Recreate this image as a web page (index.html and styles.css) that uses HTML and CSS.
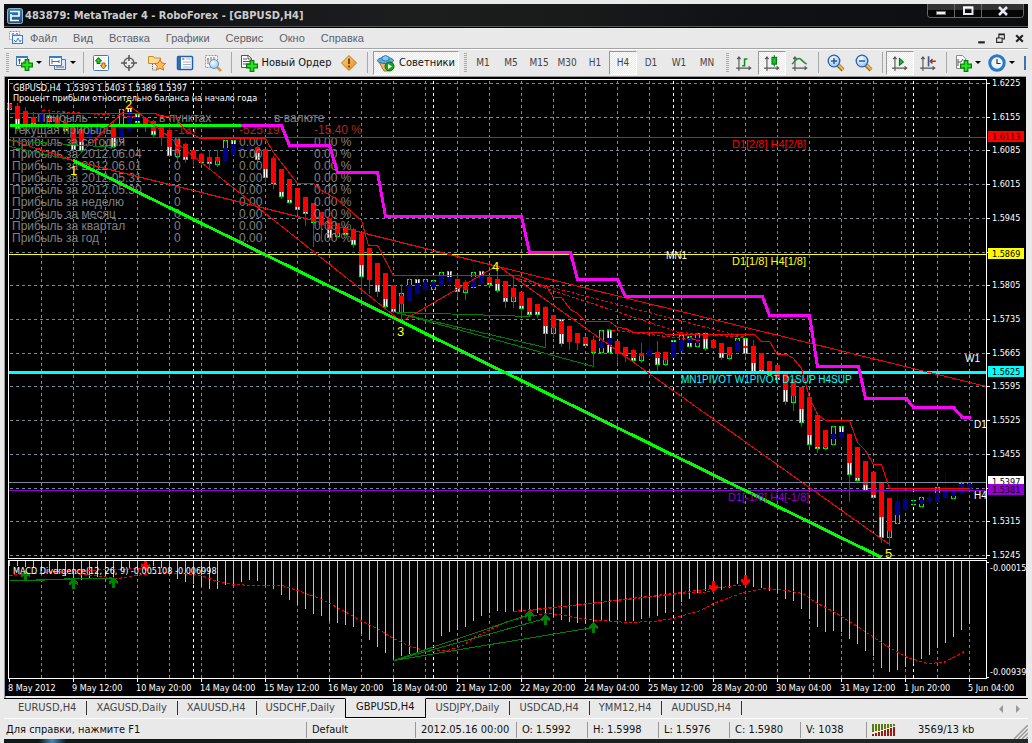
FILE: index.html
```html
<!DOCTYPE html>
<html lang="ru">
<head>
<meta charset="utf-8">
<title>MetaTrader 4 - RoboForex</title>
<link rel="stylesheet" href="styles.css">
</head>
<body>
<svg class="defs" aria-hidden="true">
  <defs>
    <linearGradient id="blueTile" x1="0" y1="0" x2="0" y2="1"><stop offset="0" stop-color="#3b7fb4"/><stop offset="1" stop-color="#15507f"/></linearGradient>
    <radialGradient id="lens" cx=".4" cy=".35" r=".7"><stop offset="0" stop-color="#fff"/><stop offset="1" stop-color="#8cc4f4"/></radialGradient>
    <linearGradient id="amber" x1="0" y1="0" x2="1" y2="1"><stop offset="0" stop-color="#ffd27a"/><stop offset="1" stop-color="#e58a1c"/></linearGradient>
    <symbol id="plus" viewBox="0 0 10 10"><path d="M3.5.5h3v3h3v3h-3v3h-3v-3h-3v-3h3z" fill="#1fe81f" stroke="#0a7a0a"/></symbol>
    <symbol id="axes" viewBox="0 0 16 16"><path d="M3.500 15V3M1 12.500h13M2 4.500l1.500-2 1.500 2M12 11l2 1.500-2 1.500" fill="none" stroke="#555"/></symbol>
    <symbol id="glass" viewBox="0 0 18 18"><path d="M10.500 10.500l5.500 5.500" stroke="#9a6a1a" stroke-width="4"/><path d="M11 10.500l5 5" stroke="#f5bd4a" stroke-width="2"/><circle cx="7" cy="7" r="5.800" fill="url(#lens)" stroke="#2a62b4" stroke-width="1.300"/></symbol>
  </defs>
</svg>
<div class="window">
  <header class="titlebar">
    <svg class="app-icon" viewBox="0 0 16 16"><rect x=".5" y=".5" width="15" height="15" rx="2" fill="url(#blueTile)" stroke="#8ab4d4"/><path d="M3 3.500h9v4.500H5M4 6v6.500h8" fill="none" stroke="#fff" stroke-width="1.700"/></svg>
    <h1 class="title">483879: MetaTrader 4 - RoboForex - [GBPUSD,H4]</h1>
    <div class="win-controls">
      <button class="win-btn" aria-label="Свернуть"><svg viewBox="0 0 12 12"><path d="M1.500 6.500h9v3h-9z" fill="#f2f0ea" stroke="#777"/></svg></button>
      <button class="win-btn" aria-label="Развернуть"><svg viewBox="0 0 12 12"><path d="M2 2.500h8.500v6.500H2z" fill="none" stroke="#e8e8f0" stroke-width="2"/><path d="M1 2.500h10" stroke="#fff" stroke-width="2"/></svg></button>
      <button class="win-btn win-close" aria-label="Закрыть"><svg viewBox="0 0 12 12"><path d="M2 2l8 8M10 2l-8 8" stroke="#e8e8f0" stroke-width="2.500"/></svg></button>
    </div>
  </header>

  <nav class="menubar">
    <svg class="menu-icon" viewBox="0 0 16 16"><rect x="1.500" y="1.500" width="10" height="8" fill="#fff" stroke="#6c9fe0" stroke-dasharray="2 1"/><rect x="4.500" y="5.500" width="10" height="8" fill="#eef5ff" stroke="#3f78d0"/><path d="M4 5l1-2 2 3 2-3 1 2M6 10l2 2 2-4 2 4 1-2" fill="none" stroke="#4a82d8"/></svg>
    <button class="menu">Файл</button><button class="menu">Вид</button><button class="menu">Вставка</button><button class="menu">Графики</button><button class="menu">Сервис</button><button class="menu">Окно</button><button class="menu">Справка</button>
    <div class="mdi-controls">
      <button class="mdi" aria-label="Свернуть окно"><svg viewBox="0 0 10 10"><path d="M2 8.500h6" stroke="#222" stroke-width="2"/></svg></button>
      <button class="mdi" aria-label="Восстановить окно"><svg viewBox="0 0 10 10"><path d="M3.500 4V1.500h5v4H7M1.500 4.500h5v4h-5zM3 1h6M1 4.500h6" fill="none" stroke="#222"/></svg></button>
      <button class="mdi" aria-label="Закрыть окно"><svg viewBox="0 0 10 10"><path d="M2 2l6 6M8 2l-6 6" stroke="#222" stroke-width="2"/></svg></button>
    </div>
  </nav>

  <div class="toolbar">
    <i class="grip"></i>
    <button class="tool drop" aria-label="Новый график"><svg viewBox="0 0 18 18"><path d="M1.500 2.500h11v9h-11z" fill="#f4faff" stroke="#3a7cc0"/><path d="M1 3h12" stroke="#3a7cc0" stroke-width="2"/><path d="M4.500 5v5M3 6h3M8 8h3" stroke="#555" fill="none"/><use href="#plus" x="6" y="5" width="12" height="12"/></svg><i class="caret"></i></button>
    <button class="tool drop" aria-label="Профили"><svg viewBox="0 0 18 18"><path d="M5.500 5.500h11v10h-11z" fill="#d8e8f8" stroke="#3a7cc0"/><path d="M.500 2.500h12v9H.500z" fill="#f4faff" stroke="#3a7cc0"/><path d="M0 3h13" stroke="#3a7cc0" stroke-width="2"/><path d="M3 5v5M3 7.500h7M10 6v3M7 13h8" stroke="#667" fill="none"/></svg><i class="caret"></i></button>
    <i class="sep"></i>
    <button class="tool" aria-label="Обзор рынка"><svg viewBox="0 0 18 18"><rect x="1.500" y="1.500" width="15" height="15" rx="1" fill="#fff" stroke="#3a7cc0"/><path d="M4 4h10M4 7h10M4 10h10M4 13h10" stroke="#d8e4ee"/><path d="M3.500 7l3-3.500 3 3.500H8v2.500H5V7z" fill="#2cc42c" stroke="#087008"/><path d="M8.500 11.500l3 3.500 3-3.500H13V9h-3v2.500z" fill="#ffb050" stroke="#b05a08"/></svg></button>
    <button class="tool" aria-label="Окно данных"><svg viewBox="0 0 18 18"><circle cx="9" cy="9" r="5" fill="none" stroke="#666" stroke-width="1.500"/><path d="M9 1v6M9 11v6M1 9h6M11 9h6" stroke="#555" stroke-width="1.500"/></svg></button>
    <button class="tool" aria-label="Навигатор"><svg viewBox="0 0 18 18"><path d="M.500 9.500v-7h5l1 1.500h6v5.500z" fill="#ffdc8c" stroke="#c88a28"/><path d="M4.500 10v6h4" fill="none" stroke="#555" stroke-dasharray="1 1"/><path d="M12 5.500l1.800 3.600 3.900.4-3 2.700 1 4-3.700-2-3.600 2 1-4-3-2.700 3.900-.4z" fill="#ffbe62" stroke="#d07814"/></svg></button>
    <button class="tool" aria-label="Терминал"><svg viewBox="0 0 18 18"><rect x="1.500" y="2.500" width="15" height="13" rx="1" fill="#fff" stroke="#235fa4" stroke-width="1.500"/><path d="M3.500 3v12" stroke="#2c6cc0" stroke-width="3"/><path d="M7 5h2M7 8h8M7 10.500h8M7 13h8M10 5h5" stroke="#9fb4cc"/><path d="M6 5h2" stroke="#d22"/></svg></button>
    <button class="tool" aria-label="Тестер стратегий"><svg viewBox="0 0 18 18"><path d="M1.500 1.500h12v12h-12z" fill="#f5f5f5" stroke="#999" stroke-dasharray="2 1"/><path d="M4 4v6M7 3v4M10 3v5M3 5h2" stroke="#777" fill="none"/><path d="M13 13l4 4" stroke="#d89a30" stroke-width="2.500"/><circle cx="10" cy="10" r="4.500" fill="url(#lens)" stroke="#5b92cc"/></svg></button>
    <i class="sep wide"></i>
    <button class="tool order"><svg viewBox="0 0 18 18"><path d="M1.500 1.500h7l3 3v9h-10z" fill="#fff" stroke="#555"/><path d="M3 5h4M3 7.500h7M3 10h7M8 1.500v3.500h3.500" fill="none" stroke="#555"/><use href="#plus" x="6" y="6" width="12" height="12"/></svg><span>Новый Ордер</span></button>
    <button class="tool" aria-label="Предупреждение"><svg viewBox="0 0 18 18"><path d="M9 1.500L16.500 9 9 16.500 1.500 9z" fill="url(#amber)" stroke="#c07818" stroke-linejoin="round"/><path d="M9 4.500v5.500M9 11.500v2" stroke="#7a4a14" stroke-width="2"/></svg></button>
    <i class="sep wide"></i>
    <button class="tool advisors pressed" aria-pressed="true"><svg viewBox="0 0 18 18"><path d="M2 8l5 9h4l5-8z" fill="#f0b76c" stroke="#a8702c"/><ellipse cx="8.500" cy="6.500" rx="8" ry="3" fill="#5cacdf" stroke="#276da0"/><path d="M5 6V3q3.500-3 7 0v3q-3.500 2-7 0" fill="#86caf0" stroke="#2c7ab0"/><circle cx="12.500" cy="12.500" r="4.500" fill="#10a818" stroke="#066a0a"/><path d="M11 10l4 2.500-4 2.500z" fill="#fff"/></svg><span>Советники</span></button>
    <i class="grip second"></i>
    <div class="frames">
      <button class="tool tf">M1</button><button class="tool tf">M5</button><button class="tool tf">M15</button><button class="tool tf">M30</button><button class="tool tf">H1</button><button class="tool tf pressed" aria-pressed="true">H4</button><button class="tool tf">D1</button><button class="tool tf">W1</button><button class="tool tf">MN</button>
    </div>
    <i class="grip third"></i>
    <button class="tool" aria-label="Бары"><svg viewBox="0 0 16 16"><use href="#axes" width="16" height="16"/><path d="M8.500 11V4M6.500 10.500h2M8.500 4.500H11" stroke="#0a8a1a" fill="none" stroke-width="1.300"/></svg></button>
    <button class="tool pressed" aria-label="Свечи" aria-pressed="true"><svg viewBox="0 0 16 16"><use href="#axes" width="16" height="16"/><path d="M10 1v10" stroke="#087a10"/><rect x="8" y="3" width="4" height="6" fill="#12c030" stroke="#087a10"/></svg></button>
    <button class="tool" aria-label="Линия"><svg viewBox="0 0 16 16"><use href="#axes" width="16" height="16"/><path d="M1 9q5-7 8-4t5 4" stroke="#209030" fill="none" stroke-width="1.300"/></svg></button>
    <i class="sep"></i>
    <button class="tool" aria-label="Увеличить"><svg viewBox="0 0 18 18"><use href="#glass" width="18" height="18"/><path d="M4 7h6M7 4v6" stroke="#2456a8" stroke-width="1.500"/></svg></button>
    <button class="tool" aria-label="Уменьшить"><svg viewBox="0 0 18 18"><use href="#glass" width="18" height="18"/><path d="M4 7h6" stroke="#2456a8" stroke-width="1.500"/></svg></button>
    <i class="sep"></i>
    <button class="tool pressed" aria-label="Автопрокрутка" aria-pressed="true"><svg viewBox="0 0 16 16"><use href="#axes" width="16" height="16"/><path d="M7.500 4l3.500 3-3.500 3z" fill="#20c040" stroke="#0a7a1a"/></svg></button>
    <button class="tool" aria-label="Сдвиг графика"><svg viewBox="0 0 16 16"><use href="#axes" width="16" height="16"/><path d="M8.500 2v9" stroke="#2b5fa8" stroke-width="1.500"/><path d="M15 6.500h-5M12 4.500l-2 2 2 2" stroke="#b03010" stroke-width="1.300" fill="none"/></svg></button>
    <i class="sep"></i>
    <button class="tool drop" aria-label="Индикаторы"><svg viewBox="0 0 18 18"><path d="M2.500 1.500h6l3 3v10h-9z" fill="#fff" stroke="#888"/><path d="M4 12V5M4 8h3l2-3" fill="none" stroke="#555"/><use href="#plus" x="6" y="6" width="12" height="12"/></svg><i class="caret"></i></button>
    <button class="tool drop" aria-label="Периоды"><svg viewBox="0 0 18 18"><circle cx="9" cy="9" r="7.200" fill="#eef6fd" stroke="#2c78c8" stroke-width="3"/><path d="M9 5v4.500h3.500" stroke="#333" fill="none" stroke-width="1.200"/></svg><i class="caret"></i></button>
    <i class="clipped"></i>
  </div>

  <main class="chart-frame">
    <svg class="chart" viewBox="4 76 1024 622" role="img" aria-label="GBPUSD,H4">
      <path d="M4 76h1022v1H6v621H4z" fill="#9a9a9a"/>
      <rect x="5" y="77" width="1021" height="619" fill="#000"/>
      <g id="grid" class="crisp"></g>
      <g class="crisp" id="indicator"></g>
      <g class="crisp" id="candles"></g>
      <g class="report" id="report"></g>
      <g class="crisp line" id="lines"></g>
      <g class="crisp frame">
        <path d="M8.500 79.500H986.500V558.500H8.500zM8.500 560.500H986.500V678.500H8.500z"/>
        <g id="ticks"></g>
      </g>
      <g id="labels"></g>
    </svg>
  </main>

  <nav class="tabs">
    <button class="tab">EURUSD,H4</button><button class="tab">XAGUSD,Daily</button><button class="tab">XAUUSD,H4</button><button class="tab last">USDCHF,Daily</button><button class="tab active">GBPUSD,H4</button><button class="tab">USDJPY,Daily</button><button class="tab">USDCAD,H4</button><button class="tab">YMM12,H4</button><button class="tab">AUDUSD,H4</button>
    <div class="tab-scroll"><button class="scroll" aria-label="Назад"><svg viewBox="0 0 4 8"><path d="M4 0v8L0 4z"/></svg></button><button class="scroll" aria-label="Вперёд"><svg viewBox="0 0 4 8"><path d="M0 0v8l4-4z"/></svg></button></div>
  </nav>

  <footer class="status">
    <span class="cell help">Для справки, нажмите F1</span>
    <span class="cell profile">Default</span>
    <span class="cell time">2012.05.16 00:00</span>
    <span class="cell price">O: 1.5992</span>
    <span class="cell price">H: 1.5998</span>
    <span class="cell price">L: 1.5976</span>
    <span class="cell price">C: 1.5980</span>
    <span class="cell volume">V: 1038</span>
    <span class="cell link"><svg viewBox="0 0 24 12"><path d="M1 0v8M4 0v7M7 0v7M10 0v6M13 0v5M16 0v4M19 0v3M22 0v2" stroke="#5a7a10" stroke-width="2"/><path d="M1 10v2M4 9v3M7 8v4M10 7v5M13 6v6M16 5v7M19 4v8M22 3v9" stroke="#9a1c10" stroke-width="2"/></svg><span>3569/13 kb</span></span>
    <svg class="resize" viewBox="0 0 14 14"><path d="M0 14L14 0M4 14L14 4M8 14l6-6M12 14l2-2" stroke="#999" stroke-width="1.500"/></svg>
  </footer>
</div>
<div class="desktop"></div>
<script src="chart.js"></script>
</body>
</html>
```
FILE: styles.css
```css
* { box-sizing: border-box; }
body {
  margin: 0;
  padding: 4px 4px 0;
  background: #e9e9e9;
  font: 11px/14px "DejaVu Sans Condensed", "DejaVu Sans", sans-serif;
  font-stretch: condensed;
  color: #111;
}
button {
  font: inherit;
  font-stretch: inherit;
  color: inherit;
  background: none;
  border: 0;
  padding: 0;
  white-space: nowrap;
}
.defs { position: absolute; width: 0; height: 0; }

.titlebar {
  display: flex;
  height: 24px;
  padding-left: 3px;
  background: linear-gradient(100deg, #0b0c0e 0 14%, #15171a 24%, #1c1e1e 40%, #191b1b 55%, #101214 70%, #0c0d0f);
  border-bottom: 1px solid #000;
  box-shadow: inset 0 -1px #555;
  align-items: center;
}
.app-icon { width: 16px; height: 16px; }
.title {
  margin: 0 0 0 2px;
  font-size: 11px;
  font-weight: bold;
  color: #ccc;
}
.win-controls {
  display: flex;
  align-self: flex-start;
  margin-left: auto;
  margin-right: 4px;
  height: 14px;
  border: 1px solid #666;
  border-top: 0;
  border-radius: 0 0 4px 4px;
  overflow: hidden;
}
.win-btn {
  display: flex;
  width: 27px;
  align-items: center;
  justify-content: center;
  background: linear-gradient(#333 0 45%, #050505 50%);
  border-right: 1px solid #666;
}
.win-btn svg { width: 12px; height: 12px; }
.win-close { width: 41px; border-right: 0; }

.menubar {
  display: flex;
  height: 20px;
  padding-left: 4px;
  align-items: center;
  gap: 16px;
  font: 11px/16px "Liberation Sans", sans-serif;
  color: #5c616a;
}
.menu-icon { width: 16px; height: 16px; margin-right: -10px; }
.mdi-controls { display: flex; gap: 8px; margin-left: auto; margin-right: 3px; }
.mdi { width: 11px; height: 12px; }
.mdi svg { display: block; width: 11px; height: 11px; }

.toolbar {
  display: flex;
  height: 28px;
  border-top: 1px solid #a4a4a4;
  box-shadow: inset 0 1px #fff;
  align-items: center;
  overflow: hidden;
}
.toolbar > * { flex: none; }
.tool {
  display: flex;
  width: 28px;
  height: 24px;
  align-items: center;
  justify-content: center;
}
.tool svg { width: 18px; height: 18px; flex: none; }
.drop { width: 34px; gap: 3px; }
.order { width: 98px; gap: 3px; }
.advisors { width: 86px; gap: 4px; }
.pressed {
  background: repeating-conic-gradient(#e9e9e9 0 25%, #fff 0 50%) 0 0 / 2px 2px;
  border: 1px solid;
  border-color: #999 #fff #fff #999;
}
.caret {
  width: 0;
  border: 3px solid transparent;
  border-top-color: #000;
  border-bottom: 0;
}
.sep { width: 1px; height: 21px; margin: 0 3px 0 4px; background: #a8a8a8; }
.wide { margin: 0 5px 0 4px; }
.grip {
  width: 3px;
  height: 20px;
  margin: 0 2px;
  background: repeating-linear-gradient(#aaa 0 1px, transparent 1px 2px);
}
.second { margin: 0 2px 0 5px; }
.third { margin: 0 1px 0 5px; }
.frames { display: flex; color: #444; font-size: 10px; }
.clipped { width: 2px; height: 14px; margin-left: auto; background: #3c74b0; margin-right: 2px; }

.chart-frame { display: block; }
.chart { display: block; width: 100%; height: auto; }
.chart text { fill: #fff; font-size: 9px; white-space: pre; }
.crisp { shape-rendering: crispEdges; }
.line { fill: none; }
.frame path { fill: none; stroke: #fff; }
.grid-line { stroke: #778899; stroke-dasharray: 3 3; }
.grid-day { stroke: #fff; stroke-dasharray: 3 3; }
.red { stroke: #f00; }
.dashed { stroke-dasharray: 3 2; }
.green { stroke: #008000; }
.lime { stroke: #0f0; stroke-width: 3; }
.magenta { stroke: #f0f; stroke-width: 3; stroke-linejoin: round; }
.chart .arial { font: 11px "Liberation Sans", sans-serif; }
.chart .small { font-size: 10px; }
.chart .report text { font: 12px "Liberation Sans", sans-serif; fill: #808080; }
.chart .report .loss { fill: #a52a2a; }
.chart .wave { font: 13px "Liberation Sans", sans-serif; fill: #ff0; }

.tabs {
  display: flex;
  height: 20px;
  border-top: 1px solid #000;
  padding-left: 2px;
  color: #444;
}
.tab {
  position: relative;
  padding: 0 10px 2px 9px;
  border-right: 1px solid #333;
  margin: 2px 0 3px;
}
.tab:first-child { padding-left: 12px; }
.last { border: 0; }
.active {
  margin: -1px 0 0;
  padding: 0 11px 2px 10px;
  border: 1px solid #000;
  border-top-color: #e9e9e9;
  color: #111;
}
.tab-scroll { display: flex; gap: 13px; margin-left: auto; margin-right: 8px; align-items: center; }
.scroll svg { display: block; width: 4px; height: 8px; fill: #999; }

.status {
  display: flex;
  height: 21px;
  border-top: 1px solid #fff;
  padding-top: 2px;
  align-items: center;
}
.cell {
  height: 16px;
  line-height: 16px;
  padding-left: 5px;
  border-left: 1px solid #999;
  white-space: nowrap;
}
.help { flex: 1; border: 0; padding-left: 2px; }
.profile { width: 109px; }
.time { width: 101px; }
.price { width: 71px; }
.volume { width: 66px; }
.link { display: flex; width: 148px; gap: 22px; align-items: center; }
.link svg { width: 24px; height: 12px; }
.resize { width: 14px; height: 14px; align-self: flex-end; }
.desktop { height: 4px; background: linear-gradient(90deg, #0c1a1a 0 35px, #4a86b8 48px, #0c1a1a 62px, #1c2a2a); }
```
FILE: chart.js
```js
// Each row: x, wick top, wick bottom, trend colour, trend top, trend bottom,
// then the price bar: kind (w = falling, h = rising, - = hidden), top, bottom.
const candles = `
9 103 109 r 104 107 h 103 109
17 103 130 r 106 118 w 118 128
25 107 135 r 111 126 -
33 112 128 r 117 122 h 118 123
41 110 124 n 114 121 -
49 112 125 r 118 120 w 116 121
57 112 128 r 117 124 w 121 124
65 118 131 r 122 128 w 127 130
73 123 153 r 128 143 w 143 149
81 128 152 r 129 141 w 141 150
89 122 140 n 125 137 -
97 117 140 n 126 132 -
105 120 133 n 126 129 -
113 122 147 r 127 136 w 136 146
121 106 143 n 127 137 h 109 141
129 105 130 n 112 130 w 108 113
137 112 126 n 117 120 w 114 122
145 117 131 r 118 124 -
153 120 136 r 121 130 w 129 134
161 124 145 r 125 136 -
169 128 156 r 130 146 w 145 155
177 139 162 r 139 152 h 150 156
185 143 162 r 144 156 w 155 159
193 150 166 r 150 158 -
201 153 164 r 154 161 w 160 162
209 150 167 r 157 161 w 160 163
217 150 166 r 157 160 h 157 164
225 133 163 n 148 160 h 140 149
233 138 154 n 144 154 w 140 145
241 143 150 n 147 149 -
249 144 150 n 147 149 -
257 146 162 r 147 152 w 151 159
265 149 181 r 149 168 w 167 177
273 156 188 r 158 182 w 180 183
281 169 198 r 169 191 w 190 196
289 179 203 r 179 199 w 198 202
297 188 213 r 188 206 w 205 209
305 197 225 r 197 211 w 210 213
313 203 246 r 203 221 w 219 222
321 212 240 r 212 224 -
329 218 238 r 218 229 w 228 237
337 223 237 r 223 232 h 230 236
345 226 235 r 227 232 w 231 234
353 228 247 r 229 239 w 238 244
361 234 292 r 234 264 w 263 276
369 248 293 r 248 279 -
377 263 296 r 263 284 w 283 291
385 273 307 r 273 298 w 297 306
393 285 312 r 285 308 w 307 311
401 284 321 r 296 303 h 293 312
409 273 300 n 285 300 h 279 286
417 270 297 n 283 293 w 279 284
425 270 293 n 282 289 h 279 283
433 275 289 n 282 286 h 280 289
441 269 285 n 275 285 h 272 277
449 268 291 n 277 281 w 271 281
457 276 296 r 279 287 w 286 291
465 280 299 r 282 289 h 288 292
473 263 291 n 277 286 h 272 287
481 270 283 n 275 283 w 271 277
489 275 285 r 277 282 w 281 284
497 266 292 r 279 283 w 282 290
505 281 307 r 281 297 w 296 301
513 275 307 r 288 296 h 295 301
521 292 316 r 292 305 w 304 308
529 298 316 r 298 311 w 310 314
537 304 317 r 304 311 w 310 314
545 306 347 r 307 325 w 324 333
553 315 337 r 315 327 h 326 333
561 319 346 r 321 333 w 319 343
569 326 349 r 326 341 -
577 333 349 r 333 342 -
585 336 346 r 337 343 w 342 345
593 336 366 r 340 351 w 350 352
601 330 353 n 341 347 h 330 352
609 323 353 n 338 344 w 330 352
617 341 362 r 341 353 -
625 347 361 r 347 354 w 353 355
633 349 362 r 350 357 w 356 360
641 343 362 r 353 355 h 354 360
649 336 358 n 350 355 -
657 341 372 r 352 357 w 356 364
665 352 365 r 352 359 h 352 364
673 339 357 n 342 357 w 340 343
681 333 350 n 340 350 h 335 341
689 328 347 n 338 342 w 336 346
697 332 347 n 338 342 h 333 346
705 332 350 r 334 338 w 333 348
713 340 348 r 340 347 -
721 343 359 r 343 352 w 351 357
729 347 359 r 347 354 h 353 358
737 328 351 n 341 351 h 338 342
745 337 356 r 346 347 w 338 353
753 340 372 r 346 362 w 361 371
761 353 372 r 353 369 w 368 371
769 361 375 r 361 370 w 369 374
777 365 380 r 365 377 w 376 379
785 374 404 r 374 389 w 388 401
793 379 410 r 379 395 h 394 402
801 387 426 r 387 408 w 407 422
809 396 446 r 397 434 w 433 444
817 413 452 r 415 446 w 445 448
825 430 449 r 430 446 h 444 448
833 422 448 n 434 438 h 426 444
841 420 444 n 432 437 w 426 432
849 434 501 r 434 462 w 461 474
857 447 481 r 447 477 w 476 480
865 461 490 r 461 484 w 483 490
873 472 498 r 472 494 w 493 497
881 482 542 r 482 516 w 515 537
889 498 545 r 498 530 h 529 537
897 462 524 n 501 514 h 501 523
905 490 510 n 499 509 -
913 492 506 n 501 503 h 500 504
921 495 508 n 500 503 h 497 506
929 491 503 n 497 501 -
937 486 502 n 493 501 h 487 501
945 473 498 n 487 497 -
953 484 499 n 491 495 h 490 498
961 477 494 n 484 493 h 483 492
969 480 490 n 484 490 h 482 490`.trim().split("\n").map(r => r.split(" "));

const macd = [566,566,567,568,571,572,574,576,578,580,579,577,576,577,570,568,570,566,566,568,572,579,582,584,587,589,589,585,586,582,580,581,585,589,595,600,605,609,614,616,621,623,625,627,634,640,647,653,659,656,654,652,649,642,636,632,630,627,621,616,613,611,612,611,612,611,613,615,617,620,622,623,624,624,621,621,620,621,621,619,616,616,613,610,602,599,593,591,591,590,588,584,586,587,588,591,593,599,601,609,619,627,632,631,632,639,644,651,656,668,672,670,667,664,659,655,648,643,637,630,624];

const put = (id, html) => { document.getElementById(id).innerHTML = html; };
const line = (cls, pts) => `<polyline class="${cls}" points="${pts}" transform="translate(.5 .5)"/>`;
const text = (x, y, s, attrs = "") => `<text x="${x}" y="${y}" ${attrs}>${s}</text>`;
const rect = (x, y, w, h, f) => `<rect x="${x}" y="${y}" width="${w}" height="${h}" fill="${f}"/>`;

const rows = [[83,"1.6225"],[117,"1.6155"],[150,"1.6085"],[184,"1.6015"],[218,"1.5945"],[252,""],[285,"1.5805"],[319,"1.5735"],[353,"1.5665"],[386,"1.5595"],[420,"1.5525"],[454,"1.5455"],[488,""],[521,"1.5315"],[555,"1.5245"]];
const dates = ["8 May 2012","9 May 12:00","10 May 20:00","14 May 04:00","15 May 12:00","16 May 20:00","18 May 04:00","21 May 12:00","22 May 20:00","24 May 04:00","25 May 12:00","28 May 20:00","30 May 04:00","31 May 12:00","1 Jun 20:00","5 Jun 04:00"];

let grid = rows.map(([y]) => line("grid-line", `9,${y} 986,${y}`)).join("");
for (let x = 41; x < 986; x += 32) grid += line("grid-line", `${x},80 ${x},678`);
for (const x of [193, 433, 673, 913]) grid += line("grid-day", `${x},80 ${x},678`);
put("grid", grid);

const periods = ["сегодня","2012.06.04","2012.06.01","2012.05.31","2012.05.30","неделю","месяц","квартал","год"];
put("report",
  text(37, 122, "Прибыль") + text(159, 122, "в пунктах") + text(274, 122, "в валюте") +
  text(12, 134, "Текущая прибыль") + text(174, 134, "-137", 'class="loss"') +
  text(239, 134, "-525.19", 'class="loss"') + text(314, 134, "-15.40 %", 'class="loss"') +
  periods.map((p, i) => {
    const y = 146 + i * 12;
    return text(12, y, "Прибыль за " + p) + text(174, y, "0") + text(239, y, "0.00") + text(314, y, "0.00 %");
  }).join(""));

put("candles", candles.map(([x, wt, wb, c, t, b, k, ut, ub]) => {
  x = +x;
  const col = c === "r" ? "#f00" : "#00008b";
  let s = rect(x, wt, 1, wb - wt + 1, col);
  if (k !== "-") {
    s += `<rect x="${x - 1.5}" y="${+ut + .5}" width="4" height="${ub - ut}" fill="${k === "w" ? "#fff" : "#000"}" stroke="#0f0"/>`;
    s += rect(x, +ut, 1, ub - ut + 1, col);
  }
  return s + rect(x - 2, t, 5, b - t + 1, col);
}).join(""));

const up = (x, y) => `<path d="M${x - 4} ${y + 4}v-3l4-4 5 4v3l-3-1v5h-3v-5z" fill="#008000"/>`;
const down = (x, y) => `<path d="M${x - 4} ${y - 3}v3l4 4 5-4v-3l-3 1v-5h-3v5z" fill="#f00"/>`;
put("indicator",
  macd.map((y, i) => rect(9 + i * 8, 561, 1, y - 561, "#c0c0c0")).join("") +
  `<g fill="none">` +
  line("red dashed", "9,575 25,573 60,572 93,575 117,578 143,574 167,572 180,573 200,575 217,581 233,584 253,585 282,585 300,591 322,599 348,613 360,620 377,628 393,638 410,646 427,651 447,650 463,645 473,637 490,629 507,621 527,616 547,613 560,614 587,619 627,622 653,621 673,618 689,613 700,610 713,603 743,592 763,588 780,589 802,593 817,603 833,611 857,626 887,646 907,657 927,663 943,662 966,650") +
  line("red dashed", "48,571 145,568") + line("red dashed", "513,611 553,607 681,593 713,591") + line("red dashed", "529,610 681,592 745,584") +
  line("green", "9,580 35,580 73,578 113,578") + line("green", "35,579 73,579") +
  line("green", "393,660 529,614") + line("green", "393,660 545,618") + line("green", "393,660 593,627") +
  `</g>` +
  up(25, 573) + up(73, 581) + up(113, 580) + up(529, 613) + up(545, 617) + up(593, 625) +
  down(145, 567) + down(713, 588) + down(745, 582));

put("lines",
  line("red", "9,137 986,137") + `<path d="M9 254.500H986" stroke="#ff0"/>` +
  `<path d="M9 482.500H986" stroke="#778899"/><path d="M9 490.500H986" stroke="#9400d3"/>` +
  `<path d="M9 372.500H986" stroke="#0ff" stroke-width="3"/>` +
  line("lime", "9,125 240,125") +
  line("green", "9,140 115,147") + line("green", "9,146 73,160") +
  line("green", "395,312 435,313 530,316") + line("green", "395,312 545,347") + line("green", "395,312 593,366") +
  line("red", "9,139 73,160 497,266 986,386") +
  line("red", "73,160 129,105 401,321 497,265 889,544") +
  line("red", "9,113 155,113 161,116 175,117 185,130 200,138 265,138 273,152 297,183 313,183 321,190 337,199 361,220 368,245 377,245 393,275 518,275 541,285 546,286 553,297 561,297 570,309 577,313 585,321 609,321 617,327 625,328 633,332 662,332 665,334 754,334 761,341 769,341 777,354 786,354 793,358 801,368 809,397 817,414 825,420 849,420 857,442 865,450 873,464 881,464 889,488 969,488") +
  line("red dashed", "42,110 145,117") + line("red dashed", "513,277 745,337") + line("red dashed", "519,279 673,330 697,340") +
  line("red dashed", "607,329 700,340") + line("red dashed", "680,332 745,337") +
  line("lime", "73,160 881,557") +
  line("magenta", "240,125 281,125 289,145 329,145 337,172 377,172 385,216 521,216 529,252 570,252 577,279 617,279 625,296 762,296 769,315 809,315 817,366 858,366 865,398 906,398 913,407 953,407 962,417 970,417"));

put("ticks",
  rows.map(([y]) => `<path d="M986 ${y + .5}h4"/>`).join("") +
  dates.map((d, i) => `<path d="M${9.5 + i * 64} 678v4"/>`).join("") + `<path d="M986 562.500h3M986 677.500h3"/>`);

const badge = (y, s, bg, fg) => rect(988, y - 6, 36, 11, bg) + text(992, y + 3, s, `style="fill:${fg}"`);
const arial = (x, y, s, fill, size = "") => text(x, y, s, `class="arial ${size}" style="fill:${fill}"`);
put("labels",
  text(13, 91, "GBPUSD,H4  1.5393 1.5403 1.5389 1.5397") +
  text(13, 101, "Процент прибыли относительно баланса на начало года") +
  text(13, 574, "MACD Divergence(12, 26, 9) -0.005108 -0.006998") +
  rows.map(([y, s]) => s ? text(992, y + 3, s) : "").join("") +
  text(990, 571, "-0.00015") + text(990, 675, "-0.00939") +
  dates.map((d, i) => text(8 + i * 64, 691, d)).join("") +
  badge(137, "1.6113", "#f00", "#000") + badge(254, "1.5869", "#ff0", "#000") + badge(372, "1.5625", "#0ff", "#000") +
  badge(482, "1.5397", "#fff", "#000") + badge(490, "1.5381", "#9400d3", "#000") +
  arial(732, 148, "D1[2/8] H4[2/8]", "#f00") + arial(732, 265, "D1[1/8] H4[1/8]", "#ff0") +
  arial(728, 501, "D1[-1/8] H4[-1/8]", "#9400d3") + arial(681, 383, "MN1PIVOT W1PIVOT D1SUP H4SUP", "#0ff", "small") +
  arial(666, 259, "MN1", "#fff", "small") + arial(965, 362, "W1", "#fff", "small") + arial(974, 428, "D1", "#fff", "small") + arial(974, 499, "H4", "#fff", "small") +
  [[70,175,1],[125,109,2],[397,336,3],[492,271,4],[885,558,5]].map(([x, y, n]) => text(x, y, n, 'class="wave"')).join(""));
```
